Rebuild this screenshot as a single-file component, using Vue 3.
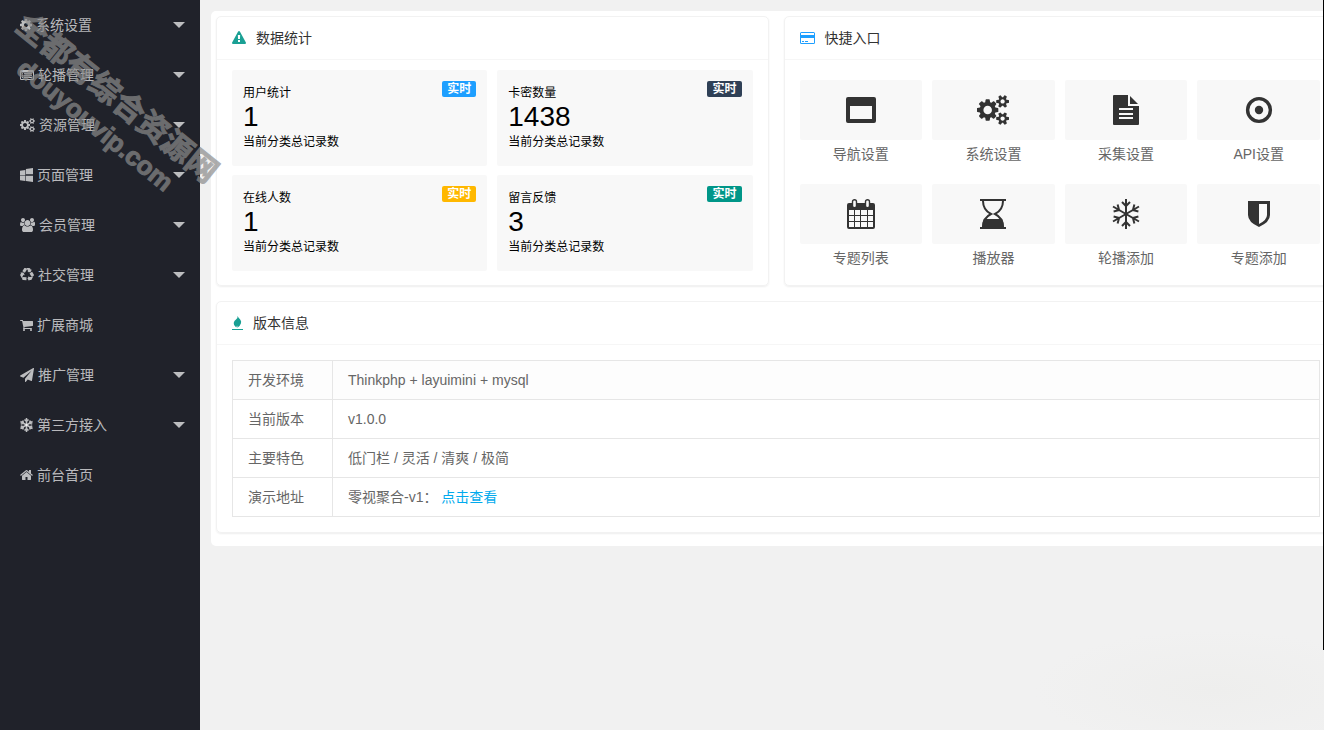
<script setup>
const gearSmall = (y) =>
  `M1856 ${y}v140q0 16-149 31-12 27-30 52 51 113 51 138 0 4-4 7-122 71-124 71-8 0-46-47t-52-68q-20 2-30 2t-30-2q-14 21-52 68t-46 47q-2 0-124-71-4-3-4-7 0-25 51-138-18-25-30-52-149-15-149-31v-140q0-16 149-31 13-29 30-52-51-113-51-138 0-4 4-7 4-2 35-20t59-34 30-16q8 0 46 46.5t52 67.5q20-2 30-2t30 2q51-71 92-112l6-2q4 0 124 70 4 3 4 7 0 25-51 138 17 23 30 52 149 15 149 31z`

const icons = {
  cog: 'M1152 896q0-106-75-181t-181-75-181 75-75 181 75 181 181 75 181-75 75-181zm512-109v222q0 12-8 23t-20 13l-185 28q-19 54-39 91 35 50 107 138 10 12 10 25t-9 23q-27 37-99 108t-94 71q-12 0-26-9l-138-108q-44 23-91 38-16 136-29 186-7 28-36 28h-222q-14 0-24.5-8.5t-11.5-21.5l-28-184q-49-16-90-37l-141 107q-10 9-25 9-14 0-25-11-126-114-165-168-7-10-7-23 0-12 8-23 15-21 51-66.5t54-70.5q-27-50-41-99l-183-27q-13-2-21-12.5t-8-23.5v-222q0-12 8-23t19-13l186-28q14-46 39-92-40-57-107-138-10-12-10-24 0-10 9-23 26-36 98.5-107.5t94.5-71.5q13 0 26 10l138 107q44-23 91-38 16-136 29-186 7-28 36-28h222q14 0 24.5 8.5t11.5 21.5l28 184q49 16 90 37l142-107q9-9 24-9 13 0 25 10 129 119 165 170 7 8 7 22 0 12-8 23-15 21-51 66.5t-54 70.5q26 50 41 98l183 28q13 2 21 12.5t8 23.5z',
  list: 'M0 416q0-160 160-160h1472q160 0 160 160v960q0 160-160 160h-1472q-160 0-160-160zM128 560v816q0 32 32 32h1472q32 0 32-32v-816zM256 680h128v120h-128zM512 680h1024v120h-1024zM256 920h128v120h-128zM512 920h1024v120h-1024zM256 1160h128v120h-128zM512 1160h1024v120h-1024z',
  cogs: 'M832 896q0-106-75-181t-181-75-181 75-75 181 75 181 181 75 181-75 75-181zm768 512q0-52-38-90t-90-38-90 38-38 90q0 53 37.5 90.5t90.5 37.5 90.5-37.5 37.5-90.5zm0-1024q0-52-38-90t-90-38-90 38-38 90q0 53 37.5 90.5t90.5 37.5 90.5-37.5 37.5-90.5zm-384 421v185q0 10-7 19.5t-16 10.5l-155 24q-11 35-32 76 34 48 90 115 7 11 7 20 0 12-7 19-23 30-82.5 89.5t-78.5 59.5q-11 0-21-7l-115-90q-37 19-77 31-11 108-23 155-7 24-30 24h-186q-11 0-20-7.5t-10-17.5l-23-153q-34-10-75-31l-118 89q-7 7-20 7-11 0-21-8-144-133-144-160 0-9 7-19 10-14 41-53t47-61q-23-44-35-82l-152-24q-10-1-17-9.5t-7-19.5v-185q0-10 7-19.5t16-10.5l155-24q11-35 32-76-34-48-90-115-7-11-7-20 0-12 7-20 22-30 82-89t79-59q11 0 21 7l115 90q34-18 77-32 11-108 23-154 7-24 30-24h186q11 0 20 7.5t10 17.5l23 153q34 10 75 31l118-89q8-7 20-7 11 0 21 8 144 133 144 160 0 8-7 19-12 16-42 54t-45 60q23 48 34 82l152 23q10 2 17 10.5t7 19.5z' + gearSmall(1338) + gearSmall(314),
  windows: 'M746 1006v651l-682-94v-557h682zm0-743v659h-682v-565zm982 743v786l-907-125v-661h907zm0-1006v794h-907v-669z',
  users: 'M593 896q-162 5-265 128h-134q-82 0-138-40.5t-56-118.5q0-353 124-353 6 0 43.5 21t97.5 42.5 119 21.5q67 0 133-23-5 37-5 66 0 159 93 287zm1071 637q0 120-73 189.5t-194 69.5h-874q-121 0-194-69.5t-73-189.5q0-53 3.5-103.5t14-109 26.5-108.5 43-97.5 62-81 85.5-53.5 111.5-20q10 0 43 21.5t73 48 107 48 135 21.5 135-21.5 107-48 73-48 43-21.5q61 0 111.5 20t85.5 53.5 62 81 43 97.5 26.5 108.5 14 109 3.5 103.5zm-1024-1277q0 106-75 181t-181 75-181-75-75-181 75-181 181-75 181 75 75 181zm704 384q0 159-112.5 271.5t-271.5 112.5-271.5-112.5-112.5-271.5 112.5-271.5 271.5-112.5 271.5 112.5 112.5 271.5zm576 225q0 78-56 118.5t-138 40.5h-134q-103-123-265-128 93-128 93-287 0-29-5-66 66 23 133 23 59 0 119-21.5t97.5-42.5 43.5-21q124 0 124 353zm-128-609q0 106-75 181t-181 75-181-75-75-181 75-181 181-75 181 75 75 181z',
  recycle: 'M836 1169l-15 368-2 22-420-29q-36-3-67-31.5t-47-65.5q-11-27-14.5-55t4-65 12-55 21.5-64 19-53q78 12 509 28zm-387-586l180 379-147-92q-63 72-111.5 144.5t-72.5 125-39.5 94.5-18.5 63l-4 21-190-357q-17-26-18-56t6-47l8-18q35-63 114-188l-140-86zm1231 517l-188 359q-12 29-36.5 46.5t-43.5 20.5l-18 4q-71 7-219 12l8 164-230-367 211-362 7 173q170 16 283 5t170-33zm-785-924q-47 63-265 435l-317-187-19-12 225-356q20-31 60-45t80-10q24 2 48.5 12t42 21 41.5 33 36 34.5 36 39.5 32 35zm655 307l212 363q18 37 12.5 76t-27.5 74q-13 20-33 37t-38 28-48.5 22-47 16-51.5 14-46 12q-34-72-265-436l313-195zm-143-226l142-83-220 373-419-20 151-86q-34-89-75-166t-75.5-123.5-64.5-80-47-46.5l-17-13 405 1q31-3 58 10.5t39 28.5l11 15q39 61 112 190z',
  cart: 'M704 1536q0 52-38 90t-90 38-90-38-38-90 38-90 90-38 90 38 38 90zm896 0q0 52-38 90t-90 38-90-38-38-90 38-90 90-38 90 38 38 90zm128-1088v512q0 24-16.5 42.5t-40.5 21.5l-1044 122q13 60 13 70 0 16-24 64h920q26 0 45 19t19 45-19 45-45 19h-1024q-26 0-45-19t-19-45q0-11 8-31.5t16-36 21.5-40 15.5-29.5l-177-823h-204q-26 0-45-19t-19-45 19-45 45-19h256q16 0 28.5 6.5t19.5 15.5 13 24.5 8 26 5.5 29.5 4.5 26h1201q26 0 45 19t19 45z',
  plane: 'M1764 11q33 24 27 64l-256 1536q-5 29-32 45-14 8-31 8-11 0-24-5l-453-185-242 295q-18 23-49 23-13 0-22-4-19-7-30.5-23.5t-11.5-36.5v-349l864-1059-1069 925-395-162q-37-14-40-55-2-40 32-59l1664-960q15-9 32-9 20 0 36 11z',
  home: 'M1472 992v480q0 26-19 45t-45 19h-384v-384h-256v384h-384q-26 0-45-19t-19-45v-480q0-1 .5-3t.5-3l575-474 575 474q1 2 1 6zm223-69l-62 74q-8 9-21 11h-3q-13 0-21-7l-692-577-692 577q-12 8-24 7-13-2-21-11l-62-74q-8-10-7-23.5t11-21.5l719-599q32-26 76-26t76 26l244 204v-195q0-14 9-23t23-9h192q14 0 23 9t9 23v408l219 182q10 8 11 21.5t-7 23.5z',
  warning: 'M1024 1375v-190q0-14-9.5-23.5t-22.5-9.5h-192q-13 0-22.5 9.5t-9.5 23.5v190q0 14 9.5 23.5t22.5 9.5h192q13 0 22.5-9.5t9.5-23.5zm-2-374l18-459q0-12-10-19-13-11-24-11h-220q-11 0-24 11-10 7-10 21l17 457q0 10 10 16.5t24 6.5h185q14 0 23.5-6.5t10.5-16.5zm-14-934l768 1408q35 63-2 126-17 29-46.5 46t-63.5 17h-1536q-34 0-63.5-17t-46.5-46q-37-63-2-126l768-1408q17-31 47-49t65-18 65 18 47 49z',
}

const menu = [
  { label: '系统设置', icon: 'cog', width: 12, x: 128, sub: true },
  { label: '轮播管理', icon: 'list', width: 14, x: 0, sub: true },
  { label: '资源管理', icon: 'cogs', width: 15, x: -64, sub: true },
  { label: '页面管理', icon: 'windows', width: 13, x: 64, sub: true },
  { label: '会员管理', icon: 'users', width: 15, x: 0, sub: true },
  { label: '社交管理', icon: 'recycle', width: 14, x: 0, sub: true },
  { label: '扩展商城', icon: 'cart', width: 13, x: 64, sub: false },
  { label: '推广管理', icon: 'plane', width: 14, x: 0, sub: true },
  { label: '第三方接入', icon: 'snow', width: 13, x: 0, sub: true },
  { label: '前台首页', icon: 'home', width: 13, x: 64, sub: false },
]

const stats = [
  { name: '用户统计', value: '1', tone: 'blue' },
  { name: '卡密数量', value: '1438', tone: 'navy' },
  { name: '在线人数', value: '1', tone: 'amber' },
  { name: '留言反馈', value: '3', tone: 'green' },
]

const shortcuts = [
  { label: '导航设置', icon: 'window' },
  { label: '系统设置', icon: 'cogs' },
  { label: '采集设置', icon: 'file' },
  { label: 'API设置', icon: 'target' },
  { label: '专题列表', icon: 'calendar' },
  { label: '播放器', icon: 'hourglass' },
  { label: '轮播添加', icon: 'snow' },
  { label: '专题添加', icon: 'shield' },
]

const arms = [0, 60, 120, 180, 240, 300]
</script>

<template>
  <div class="layout">
    <nav class="sidebar">
      <a v-for="item in menu" :key="item.label" class="menu-item" href="#">
        <svg v-if="item.icon === 'snow'" class="menu-icon" width="13" height="14" viewBox="0 0 26 28" aria-hidden="true">
          <g class="stroke bold">
            <path v-for="a in arms" :key="a" :transform="`rotate(${a} 13 14)`" d="M13 14V0M9 3L13 7L17 3" />
          </g>
        </svg>
        <svg v-else class="menu-icon" :width="item.width" height="14" :viewBox="`${item.x} 0 ${item.width * 128} 1792`" aria-hidden="true">
          <path :fill-rule="item.icon === 'list' ? 'evenodd' : 'nonzero'" :d="icons[item.icon]" />
        </svg>
        <span>{{ item.label }}</span>
        <i v-if="item.sub" class="caret"></i>
      </a>
    </nav>

    <main class="main">
      <div class="panel">
        <section class="card">
          <h2 class="card-head">
            <svg class="teal" width="14" height="14" viewBox="0 0 1792 1792" aria-hidden="true"><path :d="icons.warning" /></svg>
            数据统计
          </h2>
          <div class="stats">
            <article v-for="s in stats" :key="s.name" class="stat">
              <div class="stat-top">
                <span>{{ s.name }}</span>
                <b class="badge" :class="s.tone">实时</b>
              </div>
              <div class="stat-value">{{ s.value }}</div>
              <div class="stat-note">当前分类总记录数</div>
            </article>
          </div>
        </section>

        <section class="card">
          <h2 class="card-head">
            <svg class="blue-icon" width="15" height="14" viewBox="0 0 15 14" aria-hidden="true">
              <path fill-rule="evenodd" d="M1.500 1H13.500Q15 1 15 2.500V11.500Q15 13 13.500 13H1.500Q0 13 0 11.500V2.500Q0 1 1.500 1ZM1 2V4H14V2ZM1 7V12H14V7ZM2 10H4V11H2ZM5 10H8V11H5Z" />
            </svg>
            快捷入口
          </h2>
          <div class="shortcuts">
            <a v-for="s in shortcuts" :key="s.label" class="shortcut" href="#">
              <span class="tile">
                <svg v-if="s.icon === 'cogs'" width="32" height="30" viewBox="-64 0 1920 1792" aria-hidden="true"><path :d="icons.cogs" /></svg>
                <svg v-else width="30" height="30" viewBox="0 0 30 30" aria-hidden="true">
                  <path v-if="s.icon === 'window'" fill-rule="evenodd" d="M2 2H28Q30 2 30 4V26Q30 28 28 28H2Q0 28 0 26V4Q0 2 2 2ZM4 11V24H26V11Z" />
                  <path v-else-if="s.icon === 'file'" fill-rule="evenodd" d="M3 0H17V11H28V29Q28 30 27 30H3Q2 30 2 29V1Q2 0 3 0ZM19 1L27 9H19ZM8 13V15H22V13ZM8 18V20H22V18ZM8 22V24H22V22Z" />
                  <g v-else-if="s.icon === 'target'">
                    <circle class="stroke ring" cx="15" cy="15" r="11.400" />
                    <circle cx="15" cy="15" r="4.200" />
                  </g>
                  <g v-else-if="s.icon === 'calendar'">
                    <path fill-rule="evenodd" d="M3 4H27Q29 4 29 6V28Q29 30 27 30H3Q1 30 1 28V6Q1 4 3 4ZM3 11V16H8V11ZM9 11V16H14V11ZM15 11V16H21V11ZM22 11V16H27V11ZM3 17V22H8V17ZM9 17V22H14V17ZM15 17V22H21V17ZM22 17V22H27V17ZM3 23V28H8V23ZM9 23V28H14V23ZM15 23V28H21V23ZM22 23V28H27V23Z" />
                    <rect class="ring-tab" x="6.500" y="0.700" width="4" height="8" rx="2" />
                    <rect class="ring-tab" x="19.500" y="0.700" width="4" height="8" rx="2" />
                  </g>
                  <g v-else-if="s.icon === 'hourglass'">
                    <path d="M2 0H28V2H2ZM2 28H28V30H2ZM6 20H24Q26 24 26 28H4Q4 24 6 20Z" />
                    <path class="stroke" d="M5 2Q5 11 13 15Q5 19 5 28M25 2Q25 11 17 15Q25 19 25 28" />
                  </g>
                  <g v-else-if="s.icon === 'snow'" class="stroke">
                    <path v-for="a in arms" :key="a" :transform="`rotate(${a} 15 15)`" d="M15 15V0M11 3L15 7L19 3" />
                  </g>
                  <path v-else fill-rule="evenodd" d="M4 2H26V16Q26 23 15 28Q4 23 4 16ZM15 5V25Q23 21 23 16V5Z" />
                </svg>
              </span>
              <span class="shortcut-label">{{ s.label }}</span>
            </a>
          </div>
        </section>

        <section class="card wide">
          <h2 class="card-head">
            <svg class="teal" width="11" height="14" viewBox="0 0 11 14" aria-hidden="true">
              <path d="M5.500 0Q6.500 1.800 8 3.200Q9.700 5 9 7.300Q8 10.500 5.200 11.800Q5.800 10 5 9.600Q4.600 11 4.200 11.500Q1.400 9.500 1.700 7Q2 5 4 3.600Q6 2.300 5.500 0ZM0 13H11V14H0Z" />
            </svg>
            版本信息
          </h2>
          <div class="info">
            <table>
              <tbody>
                <tr><th scope="row">开发环境</th><td>Thinkphp + layuimini + mysql</td></tr>
                <tr><th scope="row">当前版本</th><td>v1.0.0</td></tr>
                <tr><th scope="row">主要特色</th><td>低门栏 / 灵活 / 清爽 / 极简</td></tr>
                <tr><th scope="row">演示地址</th><td>零视聚合-v1： <a class="link" href="#">点击查看</a></td></tr>
              </tbody>
            </table>
          </div>
        </section>
      </div>
      <div class="edge"></div>
    </main>

    <div class="watermark">
      <div class="mark-name">全都有综合资源网</div>
      <div class="mark-site">douyouvip.com</div>
    </div>
  </div>
</template>

<style>
body {
  margin: 0;
  background: #f1f1f1;
}
</style>

<style scoped>
.layout {
  position: relative;
  display: flex;
  min-height: 100vh;
  overflow: hidden;
  font: 14px/24px "Liberation Sans", "Noto Sans CJK SC", sans-serif;
  color: #666;
}
.layout *,
.layout *::before {
  box-sizing: border-box;
}
a {
  color: inherit;
  text-decoration: none;
}
svg {
  flex: none;
  fill: currentColor;
}
.stroke {
  fill: none;
  stroke: currentColor;
  stroke-width: 2;
}
.stroke.bold {
  stroke-width: 3;
}
.stroke.ring {
  stroke-width: 3.4;
}
.ring-tab {
  fill: #f8f8f8;
  stroke: currentColor;
  stroke-width: 1.4;
}

.sidebar {
  flex: none;
  width: 200px;
  background: #20222a;
}
.menu-item {
  display: flex;
  align-items: center;
  height: 50px;
  padding: 0 15px 0 20px;
  color: rgba(255, 255, 255, 0.7);
}
.menu-icon {
  margin-right: 4px;
}
.caret {
  margin-left: auto;
  border: 6px solid transparent;
  border-top-color: currentColor;
  border-bottom: 0;
}

.main {
  position: relative;
  flex: 1;
  min-width: 0;
  overflow: hidden;
  background: radial-gradient(ellipse 180px 60px at calc(100% - 110px) calc(100% - 40px), #eeeeed, #f1f1f1);
}
.panel {
  display: grid;
  grid-template-columns: 1fr 1fr;
  gap: 15px;
  margin: 11px -17px 0 11px;
  padding: 5px 5px 13px;
  border-radius: 5px;
  background: #fff;
}
.card {
  border: 1px solid #f2f2f2;
  border-radius: 5px;
  box-shadow: 0 1px 2px #eee;
}
.wide {
  grid-column: 1 / -1;
}
.card-head {
  display: flex;
  align-items: center;
  gap: 10px;
  height: 43px;
  margin: 0;
  padding: 0 15px;
  border-bottom: 1px solid #f6f6f6;
  font-size: 14px;
  font-weight: 400;
  color: #333;
}
.teal {
  color: #1aa094;
}
.blue-icon {
  color: #1e9fff;
}

.stats {
  display: grid;
  grid-template-columns: 1fr 1fr;
  gap: 9px 10px;
  padding: 10px 15px 14px;
}
.stat {
  height: 96px;
  padding: 11px;
  border-radius: 2px;
  background: #f8f8f8;
  font-size: 12px;
  line-height: 24px;
  color: #000;
}
.stat-top {
  display: flex;
  align-items: flex-start;
  justify-content: space-between;
}
.badge {
  padding: 0 5px;
  border-radius: 2px;
  line-height: 16px;
  color: #fff;
}
.badge.blue {
  background: #1e9fff;
}
.badge.navy {
  background: #2f4056;
}
.badge.amber {
  background: #ffb800;
}
.badge.green {
  background: #009688;
}
.stat-value {
  font-size: 28px;
}
.stat-note {
  line-height: 26px;
}

.shortcuts {
  display: grid;
  grid-template-columns: repeat(4, 1fr);
  gap: 16px 10px;
  padding: 20px 15px 0;
}
.shortcut {
  display: block;
  text-align: center;
}
.tile {
  display: flex;
  align-items: center;
  justify-content: center;
  height: 60px;
  border-radius: 2px;
  background: #f8f8f8;
  color: #333;
}
.shortcut-label {
  display: block;
  line-height: 28px;
}

.info {
  padding: 15px;
}
table {
  width: 100%;
  border-collapse: collapse;
}
th,
td {
  height: 39px;
  padding: 0 15px;
  border: 1px solid #e6e6e6;
  font-weight: 400;
  text-align: left;
}
th {
  width: 100px;
}
tr:first-child {
  background: #fdfdfd;
}
.link {
  color: #01aaed;
}

.edge {
  position: absolute;
  top: 0;
  right: 0;
  width: 1px;
  height: 89%;
  background: #000;
}
.watermark {
  position: absolute;
  top: 78px;
  left: -22px;
  width: 256px;
  line-height: 34px;
  font-weight: 700;
  text-align: center;
  white-space: nowrap;
  color: #8c8c8c;
  -webkit-text-stroke: 1px #8c8c8c;
  opacity: 0.7;
  transform: rotate(39deg);
  pointer-events: none;
}
.mark-name {
  font-size: 31px;
}
.mark-site {
  font-size: 26px;
}
</style>
